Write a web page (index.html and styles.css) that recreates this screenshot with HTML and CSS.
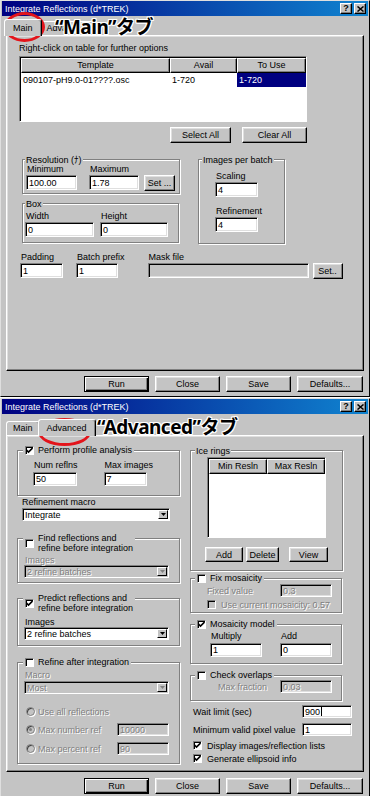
FILE: index.html
```html
<!DOCTYPE html>
<html lang="ja">
<head>
    <meta charset="UTF-8">
    <meta name="viewport" content="width=device-width, initial-scale=1.0">
    <title>Integrate Reflections (d*TREK)</title>
    <link rel="stylesheet" href="styles.css">
</head>
<body>

    <!-- Main タブ -->
    <div class="dialog dlg-main">
        <div class="titlebar">
            <span class="title">Integrate Reflections (d*TREK)</span>
            <span class="tbtn">?</span>
            <span class="tbtn"><svg width="7" height="6" viewBox="0 0 7 6"><path d="M0.5 0.5L6.5 5.5M6.5 0.5L0.5 5.5" stroke="#000" stroke-width="1.5"/></svg></span>
        </div>
        <div class="tabs">
            <div class="tab active">Main</div>
            <div class="tab">Advanced</div>
        </div>

        <div class="panel panel-main">
            <div class="hint">Right-click on table for further options</div>
            <div class="list list-tpl">
                <div class="list-head">
                    <div class="hcell c-tpl">Template</div>
                    <div class="hcell c-avail">Avail</div>
                    <div class="hcell c-use">To Use</div>
                </div>
                <div class="list-row">
                    <div class="cell c-tpl">090107-pH9.0-01????.osc</div>
                    <div class="cell c-avail">1-720</div>
                    <div class="cell c-use sel">1-720</div>
                </div>
            </div>
            <div class="tbl-btns">
                <button class="btn w61">Select All</button>
                <button class="btn w65">Clear All</button>
            </div>

            <div class="main-mid">
                <div class="mid-left">
                    <div class="group g-res">
                        <div class="gtitle">Resolution (ﾅ)</div>
                        <div class="frow">
                            <div class="field"><span class="lbl">Minimum</span><div class="edit w51">100.00</div></div>
                            <div class="field f-max"><span class="lbl">Maximum</span><div class="edit w50">1.78</div></div>
                            <button class="btn btn-set">Set ...</button>
                        </div>
                    </div>
                    <div class="group g-box">
                        <div class="gtitle">Box</div>
                        <div class="frow">
                            <div class="field"><span class="lbl">Width</span><div class="edit w69">0</div></div>
                            <div class="field f-height"><span class="lbl">Height</span><div class="edit w68">0</div></div>
                        </div>
                    </div>
                </div>
                <div class="group g-batch">
                    <div class="gtitle">Images per batch</div>
                    <div class="field f-scal"><span class="lbl">Scaling</span><div class="edit w43">4</div></div>
                    <div class="field f-ref"><span class="lbl">Refinement</span><div class="edit w43">4</div></div>
                </div>
            </div>

            <div class="frow bottom-fields">
                <div class="field"><span class="lbl">Padding</span><div class="edit w43">1</div></div>
                <div class="field f-prefix"><span class="lbl">Batch prefix</span><div class="edit w42">1</div></div>
                <div class="field f-mask"><span class="lbl">Mask file</span><div class="edit off w161"></div></div>
                <button class="btn btn-mask">Set..</button>
            </div>
        </div>

        <div class="dlg-btns">
            <button class="btn default w65">Run</button>
            <button class="btn w65">Close</button>
            <button class="btn w65">Save</button>
            <button class="btn w66">Defaults...</button>
        </div>

        <div class="ring ring-main"></div>
        <div class="note note-main">“Main”タブ</div>
    </div>

    <!-- Advanced タブ -->
    <div class="dialog dlg-adv">
        <div class="titlebar">
            <span class="title">Integrate Reflections (d*TREK)</span>
            <span class="tbtn">?</span>
            <span class="tbtn"><svg width="7" height="6" viewBox="0 0 7 6"><path d="M0.5 0.5L6.5 5.5M6.5 0.5L0.5 5.5" stroke="#000" stroke-width="1.5"/></svg></span>
        </div>
        <div class="tabs tabs-adv">
            <div class="tab">Main</div>
            <div class="tab active">Advanced</div>
        </div>

        <div class="panel panel-adv">
            <div class="col-left">
                <div class="group g-profile">
                    <div class="gtitle">
                        <span class="chk"><svg width="7" height="7" viewBox="0 0 7 7"><path d="M0.5 3L2.5 5L6.5 1" fill="none" stroke="#000" stroke-width="1.6"/></svg></span>
                        <span>Perform profile analysis</span>
                    </div>
                    <div class="frow">
                        <div class="field"><span class="lbl">Num reflns</span><div class="edit w44">50</div></div>
                        <div class="field f-maximg"><span class="lbl">Max images</span><div class="edit w43">7</div></div>
                    </div>
                </div>

                <div class="lbl l-macro">Refinement macro</div>
                <div class="combo c-macro">
                    <span class="val">Integrate</span>
                    <span class="drop"><svg width="5" height="3" viewBox="0 0 5 3"><path d="M0 0H5L2.5 3Z"/></svg></span>
                </div>

                <div class="group g-find">
                    <div class="gtitle two">
                        <span class="chk"></span>
                        <span>Find reflections and<br>refine before integration</span>
                    </div>
                    <div class="lbl dis l-img">Images</div>
                    <div class="combo off">
                        <span class="val">2 refine batches</span>
                        <span class="drop"><svg width="5" height="3" viewBox="0 0 5 3"><path d="M0 0H5L2.5 3Z" fill="#808080"/></svg></span>
                    </div>
                </div>

                <div class="group g-predict">
                    <div class="gtitle two">
                        <span class="chk"><svg width="7" height="7" viewBox="0 0 7 7"><path d="M0.5 3L2.5 5L6.5 1" fill="none" stroke="#000" stroke-width="1.6"/></svg></span>
                        <span>Predict reflections and<br>refine before integration</span>
                    </div>
                    <div class="lbl l-img">Images</div>
                    <div class="combo">
                        <span class="val">2 refine batches</span>
                        <span class="drop"><svg width="5" height="3" viewBox="0 0 5 3"><path d="M0 0H5L2.5 3Z"/></svg></span>
                    </div>
                </div>

                <div class="group g-refine">
                    <div class="gtitle">
                        <span class="chk"></span>
                        <span>Refine after integration</span>
                    </div>
                    <div class="lbl dis l-mac2">Macro</div>
                    <div class="combo off">
                        <span class="val">Most</span>
                        <span class="drop"><svg width="5" height="3" viewBox="0 0 5 3"><path d="M0 0H5L2.5 3Z" fill="#808080"/></svg></span>
                    </div>
                    <div class="rrow r-all"><span class="radio"></span><span class="dis">Use all reflections</span></div>
                    <div class="rrow r-num"><span class="radio"><span class="dot"></span></span><span class="dis">Max number ref</span><div class="edit off h13 w52">10000</div></div>
                    <div class="rrow r-pct"><span class="radio"></span><span class="dis">Max percent ref</span><div class="edit off h13 w52">90</div></div>
                </div>
            </div>

            <div class="col-right">
                <div class="group g-ice">
                    <div class="gtitle">Ice rings</div>
                    <div class="list list-ice">
                        <div class="list-head">
                            <div class="hcell c-res">Min Resln</div>
                            <div class="hcell c-res">Max Resln</div>
                        </div>
                    </div>
                    <div class="ice-btns">
                        <button class="btn w38">Add</button>
                        <button class="btn w33 b-del">Delete</button>
                        <button class="btn w39 b-view">View</button>
                    </div>
                </div>

                <div class="group g-fix">
                    <div class="gtitle">
                        <span class="chk"></span>
                        <span>Fix mosaicity</span>
                    </div>
                    <div class="vrow r-fixed"><span class="dis">Fixed value</span><div class="edit off h13 w52">0.3</div></div>
                    <div class="crow r-cur"><span class="chk off"></span><span class="dis">Use current mosaicity: 0.57</span></div>
                </div>

                <div class="group g-mos">
                    <div class="gtitle">
                        <span class="chk"><svg width="7" height="7" viewBox="0 0 7 7"><path d="M0.5 3L2.5 5L6.5 1" fill="none" stroke="#000" stroke-width="1.6"/></svg></span>
                        <span>Mosaicity model</span>
                    </div>
                    <div class="frow">
                        <div class="field"><span class="lbl">Multiply</span><div class="edit w52">1</div></div>
                        <div class="field f-add"><span class="lbl">Add</span><div class="edit w52">0</div></div>
                    </div>
                </div>

                <div class="group g-ovl">
                    <div class="gtitle">
                        <span class="chk"></span>
                        <span>Check overlaps</span>
                    </div>
                    <div class="vrow r-frac"><span class="dis">Max fraction</span><div class="edit off h13 w52">0.03</div></div>
                </div>

                <div class="vrow r-wait"><span>Wait limit (sec)</span><div class="edit h13 w50">900<span class="caret"></span></div></div>
                <div class="vrow r-min"><span>Minimum valid pixel value</span><div class="edit h13 w50">1</div></div>
                <div class="crow r-disp">
                    <span class="chk"><svg width="7" height="7" viewBox="0 0 7 7"><path d="M0.5 3L2.5 5L6.5 1" fill="none" stroke="#000" stroke-width="1.6"/></svg></span>
                    <span>Display images/reflection lists</span>
                </div>
                <div class="crow r-gen">
                    <span class="chk"><svg width="7" height="7" viewBox="0 0 7 7"><path d="M0.5 3L2.5 5L6.5 1" fill="none" stroke="#000" stroke-width="1.6"/></svg></span>
                    <span>Generate ellipsoid info</span>
                </div>
            </div>
        </div>

        <div class="dlg-btns btns-adv">
            <button class="btn default w65">Run</button>
            <button class="btn w65">Close</button>
            <button class="btn w65">Save</button>
            <button class="btn w66">Defaults...</button>
        </div>

        <div class="ring ring-adv"></div>
        <div class="note note-adv">“Advanced”タブ</div>
    </div>

</body>
</html>
```

FILE: styles.css
```css
* {
    box-sizing: border-box;
}

body {
    margin: 0;
    width: 370px;
    background: #fff;
    font-family: "Liberation Sans", Arial, "Noto Sans CJK JP", sans-serif;
    font-size: 9px;
    line-height: 10px;
    color: #000;
}

/* ventana */
.dialog {
    position: relative;
    background: #c4c4c4;
    border: 1px solid;
    border-color: #dfdfdf #000 #000 #dfdfdf;
    padding: 0 1px 4px;
}

.dialog + .dialog {
    margin-top: 1px;
}

.titlebar {
    display: flex;
    align-items: center;
    height: 15px;
    padding: 0 2px 0 3px;
    background: linear-gradient(to right, #000080, #1084d0);
    color: #fff;
}

.title {
    flex: 1;
}

.tbtn {
    display: flex;
    align-items: center;
    justify-content: center;
    width: 12px;
    height: 11px;
    margin-left: 2px;
    background: #c4c4c4;
    border: 1px solid;
    border-color: #fff #000 #000 #fff;
    box-shadow: inset -1px -1px #808080;
    color: #000;
    font-weight: bold;
    font-size: 9px;
    line-height: 9px;
}

/* abas */
.tabs {
    display: flex;
    align-items: flex-end;
    height: 19px;
    padding-left: 4px;
}

.tabs-adv {
    height: 21px;
}

.tab {
    height: 14px;
    padding: 1px 6px 0;
    line-height: 10px;
    background: #c4c4c4;
    border: 1px solid;
    border-bottom: 0;
    border-color: #fff #000 transparent #fff;
    border-radius: 3px 3px 0 0;
    box-shadow: inset -1px 0 #808080;
}

.tab.active {
    position: relative;
    z-index: 1;
    height: 17px;
    margin: 0 -2px -1px;
    padding: 3px 8px 0;
}

.panel {
    margin: 0 4px;
    border: 1px solid;
    border-color: #fff #000 #000 #fff;
    box-shadow: inset -1px -1px #808080, inset 1px 1px #dfdfdf;
}

.panel-main {
    height: 336px;
    padding: 7px 0 0 12px;
}

.panel-adv {
    display: flex;
    height: 337px;
    padding: 14px 0 0 10px;
}

/* controles */
.btn {
    height: 16px;
    padding: 0;
    font: inherit;
    color: #000;
    background: #c4c4c4;
    border: 1px solid;
    border-color: #fff #000 #000 #fff;
    box-shadow: inset -1px -1px #808080, inset 1px 1px #dfdfdf;
}

.btn.default {
    border-color: #000;
    box-shadow: inset 1px 1px #fff, inset -1px -1px #000, inset -2px -2px #808080;
}

.edit {
    display: flex;
    align-items: center;
    height: 15px;
    padding-left: 2px;
    background: #fff;
    border: 1px solid;
    border-color: #808080 #fff #fff #808080;
    box-shadow: inset 1px 1px #000, inset -1px -1px #dfdfdf;
}

.edit.off {
    background: #c4c4c4;
    color: #808080;
    text-shadow: 1px 1px #fff;
}

.panel-adv .edit {
    height: 14px;
}

.panel-adv .edit.h13 {
    height: 13px;
}

.caret {
    width: 1px;
    height: 9px;
    margin-left: 1px;
    background: #000;
}

.chk {
    display: flex;
    align-items: center;
    justify-content: center;
    flex: none;
    width: 9px;
    height: 9px;
    background: #fff;
    border: 1px solid;
    border-color: #808080 #fff #fff #808080;
    box-shadow: inset 1px 1px #000;
}

.chk.off {
    background: #c4c4c4;
}

.radio {
    display: flex;
    align-items: center;
    justify-content: center;
    flex: none;
    width: 9px;
    height: 9px;
    margin-right: 3px;
    border-radius: 50%;
    background: #c4c4c4;
    border: 1px solid #808080;
    box-shadow: inset 1px 1px #404040, 1px 1px #fff;
}

.radio .dot {
    width: 3px;
    height: 3px;
    border-radius: 50%;
    background: #808080;
}

.combo {
    display: flex;
    align-items: center;
    height: 13px;
    background: #fff;
    border: 1px solid;
    border-color: #808080 #fff #fff #808080;
    box-shadow: inset 1px 1px #000;
}

.combo.off {
    background: #c4c4c4;
    color: #808080;
    text-shadow: 1px 1px #fff;
}

.combo .val {
    flex: 1;
    padding-left: 2px;
}

.combo .drop {
    display: flex;
    align-items: center;
    justify-content: center;
    width: 10px;
    height: 9px;
    margin-right: 1px;
    background: #c4c4c4;
    border: 1px solid;
    border-color: #fff #000 #000 #fff;
}

.dis {
    color: #808080;
    text-shadow: 1px 1px #fff;
}

.lbl {
    display: block;
    height: 9px;
    line-height: 9px;
    padding-left: 1px;
}

.field {
    display: flex;
    flex-direction: column;
}

.field .edit {
    margin-top: 1px;
}

.frow {
    display: flex;
    align-items: flex-end;
}

/* grupos */
.group {
    border: 1px solid #808080;
    box-shadow: inset 1px 1px #fff, 1px 1px #fff;
}

.gtitle {
    display: flex;
    align-items: center;
    gap: 4px;
    width: max-content;
    height: 10px;
    margin-top: -5px;
    padding: 0 1px;
    background: #c4c4c4;
}

.group .gtitle:has(.chk) {
    margin-top: -6px;
    padding: 0 2px;
}

.gtitle.two {
    height: 20px;
    align-items: center;
}

/* lista */
.list {
    padding: 1px 0 0 1px;
    background: #fff;
    border: 1px solid;
    border-color: #808080 #fff #fff #808080;
    box-shadow: inset 1px 1px #000;
}

.list-head,
.list-row {
    display: flex;
}

.hcell {
    height: 15px;
    line-height: 13px;
    text-align: center;
    background: #c4c4c4;
    border: 1px solid;
    border-color: #fff #000 #000 #fff;
    box-shadow: inset -1px -1px #808080;
}

.cell {
    height: 14px;
    line-height: 14px;
    padding-left: 2px;
}

.cell.sel {
    background: #000080;
    color: #fff;
}

.c-tpl { width: 149px; }
.c-avail { width: 67px; }
.c-use { width: 69px; }
.c-res { width: 58px; }

/* larguras */
.w33 { width: 33px; }
.w38 { width: 38px; }
.w39 { width: 39px; }
.w42 { width: 42px; }
.w43 { width: 43px; }
.w44 { width: 44px; }
.w50 { width: 50px; }
.w51 { width: 51px; }
.w52 { width: 52px; }
.w61 { width: 61px; }
.w65 { width: 65px; }
.w66 { width: 66px; }
.w68 { width: 68px; }
.w69 { width: 69px; }
.w161 { width: 161px; }

/* aba Main */
.hint {
    height: 10px;
}

.list-tpl {
    width: 288px;
    height: 66px;
    margin-top: 3px;
}

.tbl-btns {
    display: flex;
    justify-content: flex-end;
    gap: 11px;
    width: 288px;
    margin-top: 5px;
}

.main-mid {
    display: flex;
    margin: 16px 0 0 3px;
}

.mid-left {
    width: 158px;
}

.g-res {
    height: 35px;
    padding-left: 3px;
}

.g-res .gtitle {
    margin-left: -1px;
}

.f-max {
    margin-left: 12px;
}

.btn-set {
    width: 31px;
    margin: 0 0 -1px 5px;
}

.g-box {
    width: 157px;
    height: 40px;
    margin-top: 9px;
    padding-left: 2px;
}

.g-box .frow {
    margin-top: 3px;
}

.f-height {
    margin-left: 6px;
}

.g-batch {
    width: 87px;
    height: 85px;
    margin-left: 18px;
    padding-left: 16px;
}

.g-batch .gtitle {
    margin-left: -13px;
}

.f-scal {
    margin-top: 7px;
}

.f-ref {
    margin-top: 10px;
}

.bottom-fields {
    margin: 9px 0 0 1px;
}

.f-prefix {
    margin-left: 13px;
}

.f-mask {
    margin-left: 23px;
}

.btn-mask {
    width: 30px;
    margin: 0 0 -1px 4px;
}

.dlg-btns {
    display: flex;
    justify-content: flex-end;
    gap: 6px;
    margin-top: 5px;
    padding-right: 5px;
}

.btns-adv {
    margin-top: 6px;
}

/* aba Advanced */
.col-left {
    width: 163px;
}

.col-right {
    width: 162px;
    margin-left: 10px;
}

.g-profile {
    height: 46px;
    padding-left: 15px;
}

.g-profile .gtitle {
    margin-left: -10px;
}

.g-profile .frow {
    margin-top: 6px;
}

.panel-adv .field .edit {
    margin-top: 2px;
}

.f-maximg {
    margin-left: 26px;
}

.l-macro {
    margin: 2px 0 0 4px;
}

.c-macro {
    width: 148px;
    margin: 1px 0 0 5px;
}

.g-find,
.g-predict,
.g-refine {
    padding: 0 10px 0 6px;
}

.g-find .gtitle,
.g-predict .gtitle,
.g-refine .gtitle {
    margin-left: -1px;
}

.g-find {
    height: 45px;
    margin-top: 17px;
}

.g-find .gtitle {
    margin-top: -12px;
}

.g-find .l-img {
    margin-top: 3px;
}

.g-predict {
    height: 48px;
    margin-top: 15px;
}

.g-predict .gtitle {
    margin-top: -10px;
}

.g-predict .l-img {
    margin-top: 5px;
}

.g-refine {
    height: 102px;
    margin-top: 16px;
}

.l-mac2 {
    margin: 4px 0 1px;
}

.rrow {
    display: flex;
    align-items: center;
    margin-left: 2px;
}

.rrow .edit {
    margin-left: auto;
}

.r-all {
    height: 9px;
    margin-top: 13px;
}

.r-num {
    margin-top: 7px;
}

.r-pct {
    margin-top: 6px;
}

.g-ice {
    width: 153px;
    height: 121px;
}

.g-ice .gtitle {
    margin-left: 4px;
}

.list-ice {
    width: 119px;
    height: 81px;
    margin: 1px 0 0 16px;
}

.ice-btns {
    display: flex;
    margin: 9px 0 0 14px;
}

.ice-btns .btn {
    height: 15px;
}

.b-del {
    margin-left: 3px;
}

.b-view {
    margin-left: 10px;
}

.vrow {
    display: flex;
    align-items: center;
}

.vrow .edit {
    margin-left: auto;
}

.crow {
    display: flex;
    align-items: center;
    gap: 5px;
    height: 9px;
}

.g-fix {
    width: 152px;
    height: 35px;
    margin-top: 7px;
    padding-left: 16px;
}

.g-fix .gtitle {
    margin-left: -12px;
}

.r-fixed {
    width: 125px;
    margin-top: 1px;
}

.r-cur {
    margin-top: 3px;
}

.g-mos {
    width: 152px;
    height: 40px;
    margin-top: 11px;
    padding-left: 19px;
}

.g-mos .gtitle {
    margin-left: -15px;
}

.g-mos .frow {
    margin-top: 3px;
}

.f-add {
    margin-left: 18px;
}

.g-ovl {
    width: 152px;
    height: 26px;
    margin-top: 11px;
    padding-left: 27px;
}

.g-ovl .gtitle {
    margin-left: -23px;
}

.r-frac {
    width: 114px;
}

.r-wait,
.r-min {
    width: 159px;
    margin-left: 3px;
}

.r-wait {
    margin-top: 4px;
}

.r-min {
    margin-top: 5px;
}

.r-disp,
.r-gen {
    margin-left: 3px;
}

.r-disp {
    margin-top: 5px;
}

.r-gen {
    margin-top: 4px;
}

/* anotações */
.ring {
    position: absolute;
    border: 3px solid #e3141b;
    border-radius: 50%;
}

.ring-main {
    left: 3px;
    top: 11px;
    width: 41px;
    height: 30px;
}

.ring-adv {
    left: 37px;
    top: 19px;
    width: 53px;
    height: 28px;
}

.note {
    position: absolute;
    font-family: "Noto Sans", "Noto Sans CJK JP", sans-serif;
    font-weight: bold;
    font-size: 19px;
    line-height: 20px;
    letter-spacing: -0.5px;
    color: #000;
    white-space: nowrap;
    text-shadow: 1px 0 #fff, -1px 0 #fff, 0 1px #fff, 0 -1px #fff,
        1px 1px #fff, -1px -1px #fff, 1px -1px #fff, -1px 1px #fff;
}

.note-main {
    left: 54px;
    top: 16px;
}

.note-adv {
    left: 96px;
    top: 18px;
}
```
